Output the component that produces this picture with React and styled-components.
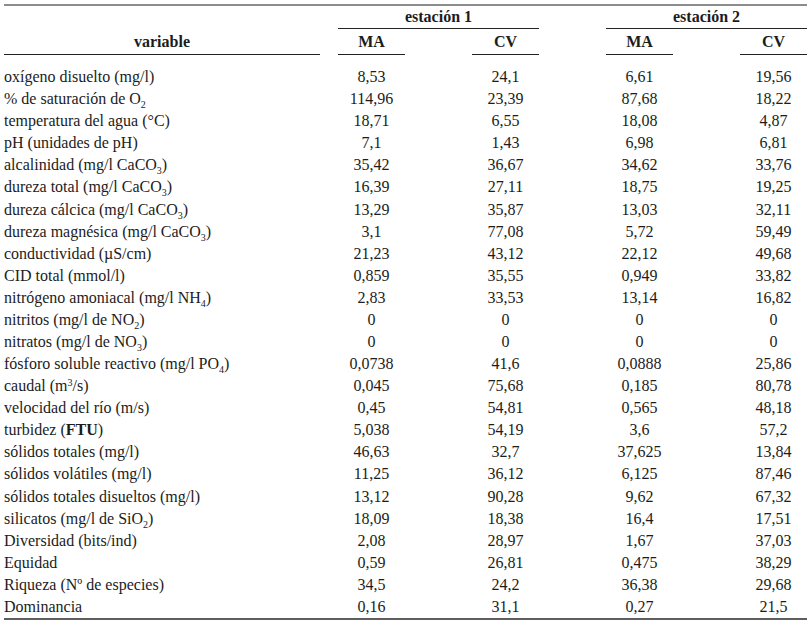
import React from "react";
import styled, { createGlobalStyle } from "styled-components";

const GlobalStyle = createGlobalStyle`
  html, body { margin: 0; padding: 0; background: #ffffff; }
  body { font-family: "Liberation Serif", "Times New Roman", serif; color: #1c1c1c; }
`;

const Page = styled.div`
  padding: 4px 0 0 4px;
  width: 811px;
  height: 627px;
  box-sizing: border-box;
  background: #fff;
`;

const Table = styled.table`
  width: 803px;
  table-layout: fixed;
  border-collapse: separate;
  border-spacing: 0;
  border-top: 2px solid #8c8c8c;
  border-bottom: 2px solid #5e5e5e;
  font-size: 16px;
`;

const HeadCell = styled.th`
  font-weight: bold;
  text-align: center;
  padding: 0;
  height: ${(p) => p.$h || 22}px;
  vertical-align: middle;
  border-bottom: ${(p) => (p.$rule ? "1px solid #222" : "none")};
  line-height: 18px;
`;

const Row = styled.tr``;

const LabelCell = styled.td`
  text-align: left;
  padding: ${(p) => (p.$first ? "11px 0 0 0" : "0")};
  height: 22.08px;
  line-height: 22px;
  white-space: nowrap;
`;

const ValueCell = styled.td`
  text-align: center;
  padding: ${(p) => (p.$first ? "11px 0 0 0" : "0")};
  height: 22.08px;
  line-height: 22px;
  white-space: nowrap;
`;

const Sub = styled.sub`
  font-size: 10px;
  vertical-align: -4px;
  line-height: 0;
`;

const Sup = styled.sup`
  font-size: 10px;
  vertical-align: 5px;
  line-height: 0;
`;

const Bold = styled.b`
  font-weight: bold;
`;

const rows = [
  [<>oxígeno disuelto (mg/l)</>, "8,53", "24,1", "6,61", "19,56"],
  [<>% de saturación de O<Sub>2</Sub></>, "114,96", "23,39", "87,68", "18,22"],
  [<>temperatura del agua (°C)</>, "18,71", "6,55", "18,08", "4,87"],
  [<>pH (unidades de pH)</>, "7,1", "1,43", "6,98", "6,81"],
  [<>alcalinidad (mg/l CaCO<Sub>3</Sub>)</>, "35,42", "36,67", "34,62", "33,76"],
  [<>dureza total (mg/l CaCO<Sub>3</Sub>)</>, "16,39", "27,11", "18,75", "19,25"],
  [<>dureza cálcica (mg/l CaCO<Sub>3</Sub>)</>, "13,29", "35,87", "13,03", "32,11"],
  [<>dureza magnésica (mg/l CaCO<Sub>3</Sub>)</>, "3,1", "77,08", "5,72", "59,49"],
  [<>conductividad (µS/cm)</>, "21,23", "43,12", "22,12", "49,68"],
  [<>CID total (mmol/l)</>, "0,859", "35,55", "0,949", "33,82"],
  [<>nitrógeno amoniacal (mg/l NH<Sub>4</Sub>)</>, "2,83", "33,53", "13,14", "16,82"],
  [<>nitritos (mg/l de NO<Sub>2</Sub>)</>, "0", "0", "0", "0"],
  [<>nitratos (mg/l de NO<Sub>3</Sub>)</>, "0", "0", "0", "0"],
  [<>fósforo soluble reactivo (mg/l PO<Sub>4</Sub>)</>, "0,0738", "41,6", "0,0888", "25,86"],
  [<>caudal (m<Sup>3</Sup>/s)</>, "0,045", "75,68", "0,185", "80,78"],
  [<>velocidad del río (m/s)</>, "0,45", "54,81", "0,565", "48,18"],
  [<>turbidez (<Bold>FTU</Bold>)</>, "5,038", "54,19", "3,6", "57,2"],
  [<>sólidos totales (mg/l)</>, "46,63", "32,7", "37,625", "13,84"],
  [<>sólidos volátiles (mg/l)</>, "11,25", "36,12", "6,125", "87,46"],
  [<>sólidos totales disueltos (mg/l)</>, "13,12", "90,28", "9,62", "67,32"],
  [<>silicatos (mg/l de SiO<Sub>2</Sub>)</>, "18,09", "18,38", "16,4", "17,51"],
  [<>Diversidad (bits/ind)</>, "2,08", "28,97", "1,67", "37,03"],
  [<>Equidad</>, "0,59", "26,81", "0,475", "38,29"],
  [<>Riqueza (Nº de especies)</>, "34,5", "24,2", "36,38", "29,68"],
  [<>Dominancia</>, "0,16", "31,1", "0,27", "21,5"],
];

export default function App() {
  return (
    <Page>
      <GlobalStyle />
      <Table>
        <colgroup>
          <col style={{ width: 316 }} />
          <col style={{ width: 18 }} />
          <col style={{ width: 67 }} />
          <col style={{ width: 67 }} />
          <col style={{ width: 67 }} />
          <col style={{ width: 67 }} />
          <col style={{ width: 67 }} />
          <col style={{ width: 67 }} />
          <col style={{ width: 67 }} />
        </colgroup>
        <thead>
          <tr>
            <HeadCell $h={22} />
            <HeadCell />
            <HeadCell colSpan={3} $rule>estación 1</HeadCell>
            <HeadCell />
            <HeadCell colSpan={3} $rule>estación 2</HeadCell>
          </tr>
          <tr>
            <HeadCell $h={25} $rule>variable</HeadCell>
            <HeadCell />
            <HeadCell $rule>MA</HeadCell>
            <HeadCell />
            <HeadCell $rule>CV</HeadCell>
            <HeadCell />
            <HeadCell $rule>MA</HeadCell>
            <HeadCell />
            <HeadCell $rule>CV</HeadCell>
          </tr>
        </thead>
        <tbody>
          {rows.map(([label, a, b, c, d], i) => (
            <Row key={i}>
              <LabelCell $first={i === 0}>{label}</LabelCell>
              <ValueCell $first={i === 0} />
              <ValueCell $first={i === 0}>{a}</ValueCell>
              <ValueCell $first={i === 0} />
              <ValueCell $first={i === 0}>{b}</ValueCell>
              <ValueCell $first={i === 0} />
              <ValueCell $first={i === 0}>{c}</ValueCell>
              <ValueCell $first={i === 0} />
              <ValueCell $first={i === 0}>{d}</ValueCell>
            </Row>
          ))}
        </tbody>
      </Table>
    </Page>
  );
}
